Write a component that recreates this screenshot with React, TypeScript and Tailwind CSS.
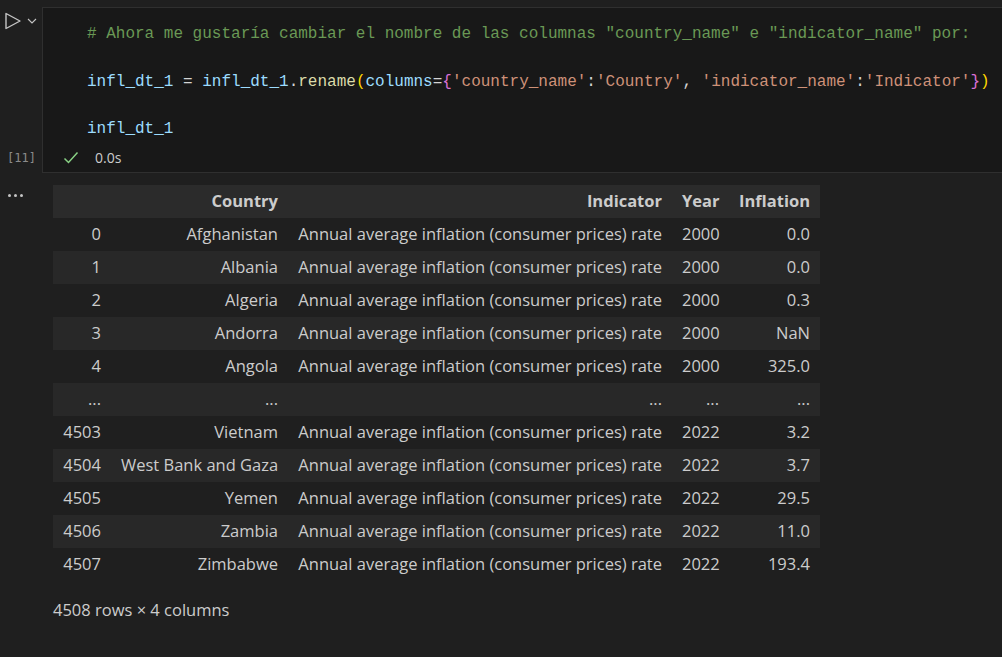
import React from "react";

const rows: [string, string, string, string][] = [
  ["0", "Afghanistan", "2000", "0.0"],
  ["1", "Albania", "2000", "0.0"],
  ["2", "Algeria", "2000", "0.3"],
  ["3", "Andorra", "2000", "NaN"],
  ["4", "Angola", "2000", "325.0"],
  ["...", "...", "...", "..."],
  ["4503", "Vietnam", "2022", "3.2"],
  ["4504", "West Bank and Gaza", "2022", "3.7"],
  ["4505", "Yemen", "2022", "29.5"],
  ["4506", "Zambia", "2022", "11.0"],
  ["4507", "Zimbabwe", "2022", "193.4"],
];

const IND = "Annual average inflation (consumer prices) rate";

export default function App() {
  return (
    <div
      className="w-[1002px] h-[657px] bg-[#1f1f1f] overflow-hidden relative text-[#cccccc]"
      style={{ fontFamily: '"Open Sans", "Noto Sans", sans-serif' }}
    >
      {/* Code cell */}
      <div className="flex pt-[7px]">
        <div className="w-[42px] shrink-0 relative">
          <svg className="absolute left-[4px] top-[5px]" width="18" height="18" viewBox="0 0 18 18">
            <polygon points="2,1.5 16,9 2,16.5" fill="none" stroke="#c5c5c5" strokeWidth="1.4" strokeLinejoin="round" />
          </svg>
          <svg className="absolute left-[27px] top-[10px]" width="10" height="8" viewBox="0 0 10 8">
            <polyline points="1,2 5,6 9,2" fill="none" stroke="#c5c5c5" strokeWidth="1.1" />
          </svg>
          <div
            className="absolute left-[7px] top-[143px] text-[12px] text-[#8b8b8b] leading-[16px]"
            style={{ fontFamily: '"DejaVu Sans Mono", monospace' }}
          >
            [11]
          </div>
        </div>
        <div className="flex-1 bg-[#181818] border-l border-t border-b border-[#2f2f2f] h-[166px]">
          <div
            className="pl-[44px] pt-[15px] text-[16px] leading-[23.75px] whitespace-pre"
            style={{ fontFamily: '"Liberation Mono", monospace' }}
          >
            <div className="text-[#6a9955]">
              # Ahora me gustaría cambiar el nombre de las columnas "country_name" e "indicator_name" por:
            </div>
            <div>&nbsp;</div>
            <div>
              <span className="text-[#9cdcfe]">infl_dt_1</span>
              <span className="text-[#d4d4d4]"> = </span>
              <span className="text-[#9cdcfe]">infl_dt_1</span>
              <span className="text-[#d4d4d4]">.</span>
              <span className="text-[#dcdcaa]">rename</span>
              <span className="text-[#ffd700]">(</span>
              <span className="text-[#9cdcfe]">columns</span>
              <span className="text-[#d4d4d4]">=</span>
              <span className="text-[#da70d6]">{"{"}</span>
              <span className="text-[#ce9178]">'country_name'</span>
              <span className="text-[#d4d4d4]">:</span>
              <span className="text-[#ce9178]">'Country'</span>
              <span className="text-[#d4d4d4]">, </span>
              <span className="text-[#ce9178]">'indicator_name'</span>
              <span className="text-[#d4d4d4]">:</span>
              <span className="text-[#ce9178]">'Indicator'</span>
              <span className="text-[#da70d6]">{"}"}</span>
              <span className="text-[#ffd700]">)</span>
            </div>
            <div>&nbsp;</div>
            <div className="text-[#9cdcfe]">infl_dt_1</div>
          </div>
          <div className="flex items-center h-[24px] mt-[4px] pl-[20px]">
            <svg width="16" height="14" viewBox="0 0 16 14">
              <polyline points="1.5,7.5 5.5,11.5 14.5,1.5" fill="none" stroke="#89d185" strokeWidth="1.5" />
            </svg>
            <span className="ml-[16px] text-[14px] text-[#cccccc]">0.0s</span>
          </div>
        </div>
      </div>

      {/* Output */}
      <div className="flex mt-[12px]">
        <div className="w-[53px] shrink-0 relative">
          <div className="absolute left-[8px] top-[9px] flex gap-[3px]">
            <span className="w-[3px] h-[3px] rounded-full bg-[#c5c5c5]" />
            <span className="w-[3px] h-[3px] rounded-full bg-[#c5c5c5]" />
            <span className="w-[3px] h-[3px] rounded-full bg-[#c5c5c5]" />
          </div>
        </div>
        <div>
          <table className="table-fixed border-collapse w-[767px] text-[16.5px]">
            <colgroup>
              <col className="w-[58px]" />
              <col className="w-[177px]" />
              <col className="w-[384px]" />
              <col className="w-[57px]" />
              <col className="w-[91px]" />
            </colgroup>
            <thead>
              <tr className="bg-[#2b2b2b] h-[33px]">
                <th className="px-[10px]"></th>
                <th className="px-[10px] text-right font-bold whitespace-nowrap">Country</th>
                <th className="px-[10px] text-right font-bold whitespace-nowrap">Indicator</th>
                <th className="px-[10px] text-right font-bold whitespace-nowrap">Year</th>
                <th className="px-[10px] text-right font-bold whitespace-nowrap">Inflation</th>
              </tr>
            </thead>
            <tbody>
              {rows.map((r, i) => (
                <tr key={i} className={`h-[33px] ${i % 2 === 1 ? "bg-[#282828]" : "bg-[#1f1f1f]"}`}>
                  <td className="px-[10px] text-right whitespace-nowrap">{r[0]}</td>
                  <td className="px-[10px] text-right whitespace-nowrap">{r[1]}</td>
                  <td className="px-[10px] text-right whitespace-nowrap">{r[0] === "..." ? "..." : IND}</td>
                  <td className="px-[10px] text-right whitespace-nowrap">{r[2]}</td>
                  <td className="px-[10px] text-right whitespace-nowrap">{r[3]}</td>
                </tr>
              ))}
            </tbody>
          </table>
          <div className="mt-[18px] text-[16.5px] leading-[22px]">4508 rows × 4 columns</div>
        </div>
      </div>
    </div>
  );
}
